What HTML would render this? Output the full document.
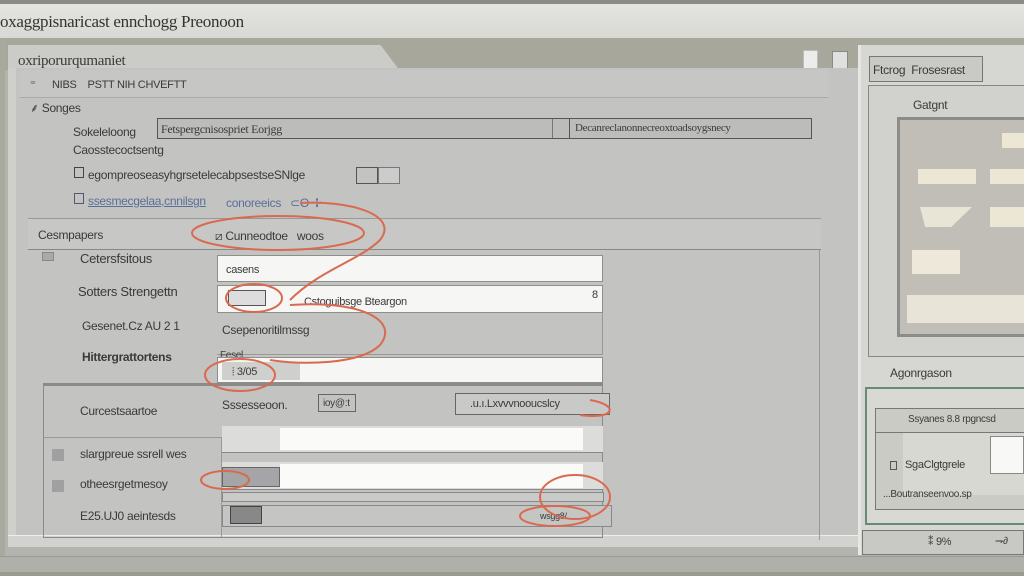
<!DOCTYPE html>
<html><head><style>
*{margin:0;padding:0;box-sizing:border-box}
body{width:1024px;height:576px;overflow:hidden;background:#b4b4ae;font-family:"Liberation Sans",sans-serif;position:relative;color:#333}
div,span{position:absolute}
.t{font-size:12px;white-space:nowrap;color:#3a3a3a;letter-spacing:-0.3px}
.in{background:#f6f6f4;border:1px solid #8e8e8a}
</style></head><body>
<div style="left:0;top:0;width:1024px;height:4px;background:#8a8a86"></div>
<div style="left:0;top:4px;width:1024px;height:34px;background:linear-gradient(#e4e4e1,#d8d8d4)"></div>
<div class="t" style="left:0;top:12px;font-size:17px;font-family:'Liberation Serif',serif;color:#333">oxaggpisnaricast ennchogg Preonoon</div>
<div style="left:0;top:38px;width:1024px;height:32px;background:#a7a89b"></div>
<div style="left:0;top:38px;width:5px;height:520px;background:#a9aa9e"></div>
<!-- tab -->
<div style="left:8px;top:45px;width:372px;height:26px;background:#cbcbc8"></div>
<div style="left:370px;top:45px;width:30px;height:26px;background:#cbcbc8;clip-path:polygon(0 0,35% 0,100% 100%,0 100%)"></div>
<div class="t" style="left:18px;top:53px;font-family:'Liberation Serif',serif;font-size:15px">oxriporurqumaniet</div>
<div style="left:803px;top:50px;width:15px;height:20px;background:#ececea;border:1px solid #bbb"></div>
<div style="left:832px;top:51px;width:16px;height:18px;background:#e0e0de;border:1px solid #888"></div>
<!-- main panel -->
<div style="left:8px;top:68px;width:850px;height:478px;background:#c3c3c1;border-left:8px solid #cfcfcc"></div>
<div style="left:8px;top:535px;width:850px;height:12px;background:#d2d2cf;border-top:1px solid #eee"></div>
<div style="left:20px;top:70px;width:808px;height:28px;background:#c6c6c4;border-bottom:1px solid #aaa"></div>
<div class="t" style="left:30px;top:78px;font-size:11px">⁼&nbsp;&nbsp;&nbsp;&nbsp;&nbsp;&nbsp;NIBS&nbsp;&nbsp;&nbsp;&nbsp;PSTT NIH CHVEFTT</div>
<div class="t" style="left:30px;top:99px">⸙ Songes</div>
<div class="t" style="left:73px;top:125px">Sokeleloong</div>
<div style="left:157px;top:118px;width:655px;height:21px;background:#bcbcba;border:1px solid #555"></div>
<div style="left:552px;top:119px;width:18px;height:19px;border-left:1px solid #777;border-right:1px solid #555"></div>
<div class="t" style="left:161px;top:122px;font-family:'Liberation Serif',serif">Fetspergcnisospriet Eorjgg</div>
<div class="t" style="left:575px;top:122px;font-family:'Liberation Serif',serif;font-size:11px">Decanreclanonnecreoxtoadsoygsnecy</div>
<div class="t" style="left:73px;top:143px">Caosstecoctsentg</div>
<div style="left:74px;top:167px;width:10px;height:11px;border:1px solid #444"></div>
<div class="t" style="left:88px;top:168px">egompreoseasyhgrsetelecabpsestseSNlge</div>
<div style="left:356px;top:167px;width:22px;height:17px;border:1px solid #555"></div>
<div style="left:378px;top:167px;width:22px;height:17px;border:1px solid #777;background:#ccc"></div>
<div style="left:74px;top:193px;width:10px;height:11px;border:1px solid #557"></div>
<div class="t" style="left:88px;top:194px;color:#5a6e98;text-decoration:underline">ssesmecgelaa,cnnilsgn</div>
<div class="t" style="left:226px;top:196px;color:#5a6e98">conoreeics&nbsp;&nbsp; ⊂O ✢</div>
<!-- section header -->
<div style="left:28px;top:218px;width:793px;height:32px;background:#c7c7c5;border-top:1px solid #999;border-bottom:1px solid #888"></div>
<div class="t" style="left:38px;top:228px">Cesmpapers</div>
<div class="t" style="left:215px;top:229px">⧄ Cunneodtoe&nbsp;&nbsp; woos</div>
<div style="left:20px;top:250px;width:800px;height:290px;border-right:1px solid #999"></div>
<div style="left:42px;top:252px;width:12px;height:9px;background:#aaa;border:1px solid #888"></div>
<div class="t" style="left:80px;top:251px;font-size:13px">Cetersfsitous</div>
<div class="in" style="left:217px;top:255px;width:386px;height:27px"></div>
<div class="t" style="left:226px;top:264px;font-size:11px">casens</div>
<div class="t" style="left:78px;top:284px;font-size:13px">Sotters Strengettn</div>
<div class="in" style="left:217px;top:285px;width:386px;height:28px"></div>
<div style="left:228px;top:290px;width:38px;height:16px;border:1px solid #555;background:#ddd"></div>
<div class="t" style="left:304px;top:296px;font-size:11px">Cstoguibsge Bteargon</div>
<div class="t" style="left:592px;top:289px;font-size:11px">8</div>
<div class="t" style="left:82px;top:319px;font-size:12px">Gesenet.Cz AU 2 1</div>
<div class="t" style="left:222px;top:323px">Csepenoritilmssg</div>
<div style="left:217px;top:313px;width:386px;height:42px;border-right:1px solid #999;border-bottom:1px solid #999"></div>
<div class="t" style="left:82px;top:350px;font-weight:bold">Hittergrattortens</div>
<div class="t" style="left:220px;top:350px;font-size:10px">Fesel</div>
<div class="in" style="left:217px;top:357px;width:386px;height:26px"></div>
<div style="left:222px;top:362px;width:78px;height:18px;background:#cfcfcd"></div>
<div class="t" style="left:232px;top:366px;font-size:11px">⦙ 3/05</div>
<!-- lower box -->
<div style="left:43px;top:383px;width:560px;height:155px;border:1px solid #8a8a88;border-top:3px solid #8a8a88"></div>
<div style="left:43px;top:437px;width:178px;height:1px;background:#999"></div>
<div style="left:221px;top:437px;width:1px;height:100px;background:#999"></div>
<div class="t" style="left:80px;top:404px">Curcestsaartoe</div>
<div class="t" style="left:222px;top:398px">Sssesseoon.</div>
<div style="left:318px;top:394px;width:38px;height:18px;border:1px solid #666"></div>
<div class="t" style="left:323px;top:398px;font-size:10px">ioy@:t</div>
<div style="left:455px;top:393px;width:155px;height:22px;border:1px solid #666;background:#c9c9c7"></div>
<div class="t" style="left:470px;top:398px;font-size:11px">.u.ı.Lxvvvnooucslcy</div>
<div style="left:222px;top:426px;width:381px;height:27px;background:#dcdcda;border-bottom:1px solid #888"></div>
<div style="left:280px;top:428px;width:303px;height:22px;background:#fafaf8"></div>
<div style="left:52px;top:449px;width:12px;height:12px;background:#a0a0a0"></div>
<div class="t" style="left:80px;top:447px">slargpreue ssrell wes</div>
<div style="left:222px;top:462px;width:381px;height:28px;background:#dcdcda;border-bottom:1px solid #888"></div>
<div style="left:280px;top:464px;width:303px;height:24px;background:#fafaf8"></div>
<div style="left:222px;top:467px;width:58px;height:20px;background:#a5a5a8;border:1px solid #666"></div>
<div style="left:52px;top:480px;width:12px;height:12px;background:#a0a0a0"></div>
<div class="t" style="left:80px;top:477px">otheesrgetmesoy</div>
<div style="left:222px;top:492px;width:382px;height:10px;border:1px solid #888;background:#cacac8"></div>
<div style="left:222px;top:505px;width:390px;height:22px;background:#c5c5c3;border:1px solid #888"></div>
<div style="left:230px;top:506px;width:32px;height:18px;background:#888;border:1px solid #444"></div>
<div class="t" style="left:80px;top:509px">E25.UJ0 aeintesds</div>
<div class="t" style="left:540px;top:511px;font-size:9px">wsgg8/</div>
<!-- right panel -->
<div style="left:858px;top:45px;width:166px;height:510px;background:#d6d6d2;border-left:3px solid #e6e6e2"></div>
<div style="left:869px;top:56px;width:114px;height:26px;background:#c9c9c5;border:1px solid #777"></div>
<div class="t" style="left:873px;top:63px">Ftcrog&nbsp; Frosesrast</div>
<div style="left:868px;top:85px;width:156px;height:272px;background:#d1d1cd;border:1px solid #888;border-right:none"></div>
<div class="t" style="left:913px;top:98px;font-size:12px">Gatgnt</div>
<div style="left:897px;top:117px;width:127px;height:220px;background:#c0beb6;border:3px solid #8c8c88;border-right:none"></div>
<div style="left:1002px;top:133px;width:22px;height:15px;background:#ece6d4"></div>
<div style="left:918px;top:169px;width:58px;height:15px;background:#ece6d4"></div>
<div style="left:990px;top:169px;width:34px;height:15px;background:#ece6d4"></div>
<div style="left:920px;top:207px;width:52px;height:20px;background:#e8e4d6;clip-path:polygon(0 0,100% 0,60% 100%,10% 100%)"></div>
<div style="left:990px;top:207px;width:34px;height:20px;background:#ece6d4"></div>
<div style="left:912px;top:250px;width:48px;height:24px;background:#ede8da"></div>
<div style="left:907px;top:295px;width:117px;height:28px;background:#e8e4d8"></div>
<div class="t" style="left:890px;top:366px">Agonrgason</div>
<div style="left:865px;top:387px;width:159px;height:138px;background:#d9d9d4;border:2px solid #6a8a78;border-right:none"></div>
<div style="left:875px;top:408px;width:149px;height:102px;background:#cbcbc6;border:1px solid #777;border-right:none"></div>
<div style="left:875px;top:432px;width:149px;height:1px;background:#777"></div>
<div class="t" style="left:908px;top:414px;font-size:10px">Ssyanes 8.8 rpgncsd</div>
<div style="left:903px;top:433px;width:121px;height:62px;background:#d8d8d2"></div>
<div style="left:990px;top:436px;width:34px;height:38px;background:#f8f8f6;border:1px solid #888"></div>
<div style="left:890px;top:461px;width:7px;height:9px;border:1px solid #555"></div>
<div class="t" style="left:905px;top:459px;font-size:11px">SgaClgtgrele</div>
<div class="t" style="left:883px;top:489px;font-size:10px">...Boutranseenvoo.sp</div>
<div style="left:862px;top:530px;width:162px;height:25px;background:#c8c8c4;border:1px solid #777"></div>
<div class="t" style="left:928px;top:535px;font-size:11px">⁑ 9%</div>
<div class="t" style="left:995px;top:536px;font-size:10px">⇁∂</div>
<div style="left:0;top:556px;width:1024px;height:20px;background:#b0b0aa;border-top:1px solid #999"></div>
<div style="left:0;top:572px;width:1024px;height:4px;background:#9a9a90"></div>
<!-- annotations -->
<svg style="position:absolute;left:0;top:0" width="1024" height="576" fill="none" stroke="#d96a50" stroke-width="2">
<ellipse cx="278" cy="233" rx="86" ry="17"/>
<path d="M300 203 C350 200,400 215,380 240 C360 260,320 270,290 300"/>
<ellipse cx="254" cy="298" rx="28" ry="14"/>
<path d="M290 305 C360 300,400 320,380 345 C360 365,300 365,270 360"/>
<ellipse cx="240" cy="375" rx="35" ry="16"/>
<path d="M590 400 C620 405,615 420,580 415"/>
<ellipse cx="225" cy="480" rx="24" ry="9"/>
<ellipse cx="575" cy="497" rx="35" ry="22"/>
<ellipse cx="555" cy="516" rx="35" ry="10"/>
</svg>
</body></html>
